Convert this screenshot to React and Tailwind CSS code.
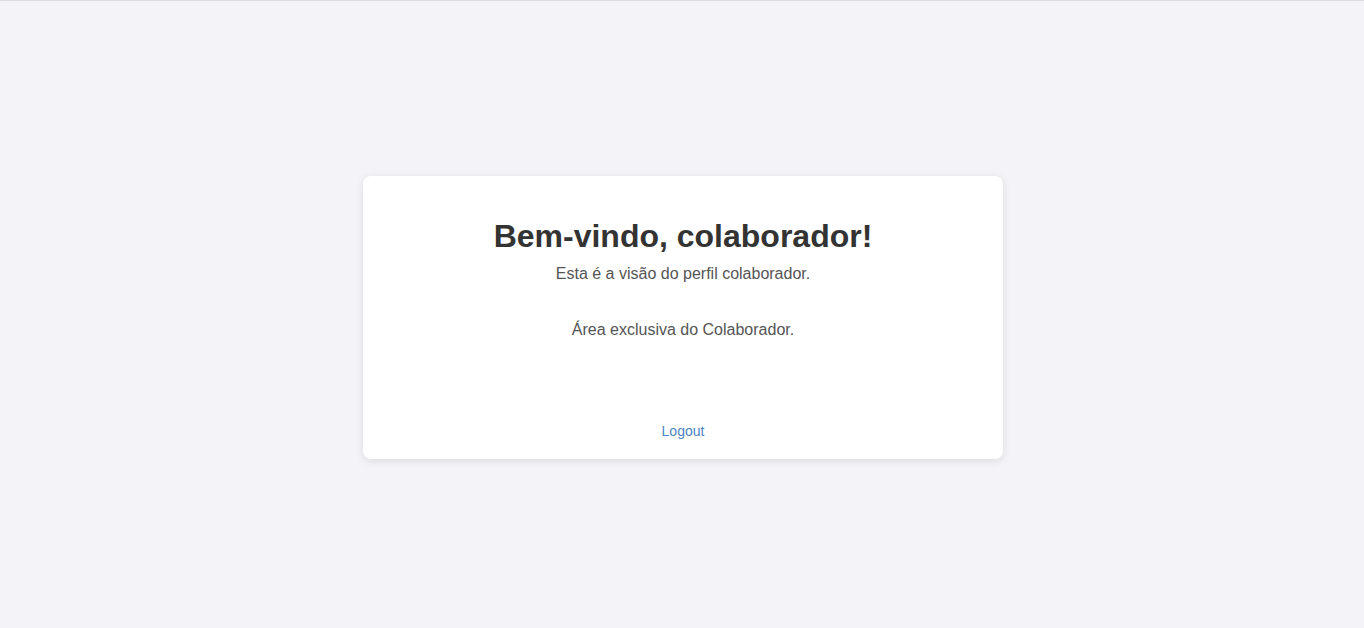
export default function App() {
  return (
    <div className="min-h-screen h-[628px] flex items-center justify-center pt-[6px] pl-[2px] bg-[#f4f4f8] border-t border-[#dcdcdc] font-['Liberation_Sans',Arial,sans-serif]">
      {/* Card */}
      <div className="w-[640px] bg-white rounded-lg shadow-[0_2px_8px_rgba(0,0,0,0.1)] pt-[42px] pb-[16px] px-8 text-center">
        <h1 className="text-[32px] leading-[37px] font-bold text-[#333]">Bem-vindo, colaborador!</h1>
        <p className="mt-[10px] text-base leading-[18px] text-[#555]">Esta é a visão do perfil colaborador.</p>
        <p className="mt-[38px] text-base leading-[18px] text-[#555]">Área exclusiva do Colaborador.</p>
        <button className="mt-[84px] text-sm leading-4 text-[#4a84c2]">Logout</button>
      </div>
    </div>
  );
}
